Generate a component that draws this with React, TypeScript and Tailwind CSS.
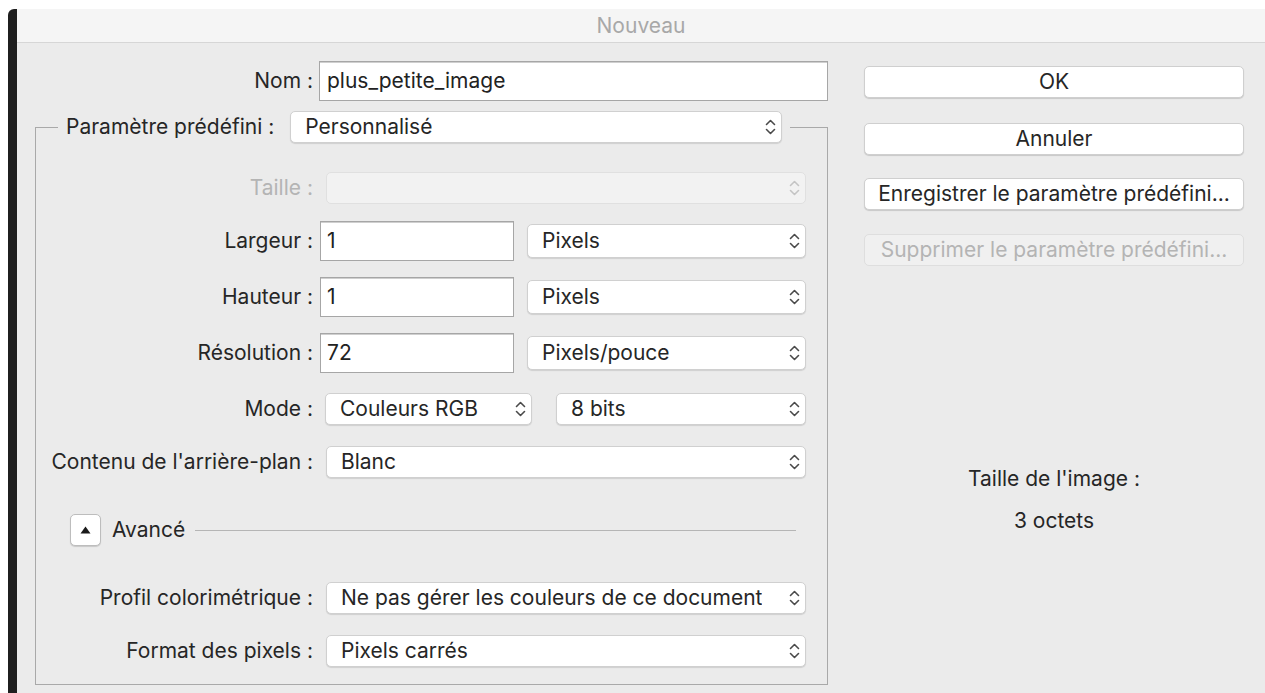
import React from "react";

const font = { fontFamily: "Inter, 'Liberation Sans', sans-serif" };

const Chevrons = ({ muted }: { muted?: boolean }) => (
  <svg width="13" height="20" viewBox="0 0 13 20" className="shrink-0">
    <path
      d="M2.5 7.5 L6.5 3.5 L10.5 7.5 M2.5 12.5 L6.5 16.5 L10.5 12.5"
      fill="none"
      stroke={muted ? "#c4c4c4" : "#4a4a4a"}
      strokeWidth="1.6"
      strokeLinecap="round"
      strokeLinejoin="round"
    />
  </svg>
);

type SelectProps = {
  value?: string;
  className?: string;
  disabled?: boolean;
};

const Select: React.FC<SelectProps> = ({ value, className = "", disabled }) => (
  <div
    className={
      "flex items-center justify-between h-[32px] rounded-[5px] border pl-[14px] pr-[4px] " +
      (disabled
        ? "bg-[#f2f2f2] border-[#e0e0e0] "
        : "bg-white border-[#d0d0d0] shadow-[0_1px_1px_rgba(0,0,0,0.12)] ") +
      className
    }
  >
    <span className="text-[21px] text-[#262626] truncate">{value}</span>
    <Chevrons muted={disabled} />
  </div>
);

const TextInput = ({ value, className = "" }: { value: string; className?: string }) => (
  <div
    className={
      "flex items-center h-[40px] bg-white border border-[#a6a6a6] shadow-[inset_0_1px_0_#cfcfcf] pl-[6px] text-[21px] text-[#222] " +
      className
    }
  >
    {value}
  </div>
);

const Label = ({ children, muted }: { children: React.ReactNode; muted?: boolean }) => (
  <span
    className={
      "w-[277px] shrink-0 text-right text-[21px] whitespace-nowrap " +
      (muted ? "text-[#b4b4b4]" : "text-[#262626]")
    }
  >
    {children}
  </span>
);

const DialogButton = ({ label, disabled }: { label: string; disabled?: boolean }) => (
  <div
    className={
      "flex items-center justify-center h-[32px] rounded-[5px] border text-[21px] whitespace-nowrap " +
      (disabled
        ? "bg-[#f0f0f0] border-[#dedede] text-[#b4b4b4]"
        : "bg-white border-[#cfcfcf] text-[#262626] shadow-[0_1px_1px_rgba(0,0,0,0.15)]")
    }
  >
    {label}
  </div>
);

export default function App() {
  return (
    <div className="w-[1265px] h-[693px] bg-white pl-[8px] pt-[9px] flex overflow-hidden" style={font}>
      <div className="w-[9px] shrink-0 bg-[#1f1f1f] rounded-tl-[6px]" />
      <div className="flex-1 flex flex-col bg-[#ebebeb]">
        {/* title bar */}
        <div className="h-[34px] shrink-0 flex items-center justify-center bg-[#f5f5f5] border-b border-[#d6d6d6]">
          <span className="text-[21px] text-[#a8a8a8]">Nouveau</span>
        </div>

        <div className="flex flex-1">
          {/* left column */}
          <div className="pl-[18px] pt-[19px] w-[811px] shrink-0">
            <div className="flex items-center h-[38px]">
              <span className="w-[278px] shrink-0 text-right text-[21px] text-[#262626]">Nom :</span>
              <TextInput value="plus_petite_image" className="ml-[6px] w-[509px] h-[38px] pl-[7px]" />
            </div>

            <fieldset className="mt-[11px] border border-[#a9a9a9] w-[793px] pb-[17px]">
              <legend className="ml-[22px] px-[8px] flex items-center">
                <span className="text-[21px] text-[#262626] whitespace-nowrap">Paramètre prédéfini :</span>
                <Select value="Personnalisé" className="ml-[16px] w-[492px] h-[30px] pl-[12px]" />
              </legend>

              <div className="flex items-center mt-[29px] h-[32px]">
                <Label muted>Taille :</Label>
                <Select disabled className="ml-[13px] w-[480px]" />
              </div>

              <div className="flex items-center mt-[17px] h-[40px]">
                <Label>Largeur :</Label>
                <TextInput value="1" className="ml-[7px] w-[194px]" />
                <Select value="Pixels" className="ml-[13px] w-[279px] h-[34px]" />
              </div>

              <div className="flex items-center mt-[16px] h-[40px]">
                <Label>Hauteur :</Label>
                <TextInput value="1" className="ml-[7px] w-[194px]" />
                <Select value="Pixels" className="ml-[13px] w-[279px] h-[34px]" />
              </div>

              <div className="flex items-center mt-[16px] h-[40px]">
                <Label>Résolution :</Label>
                <TextInput value="72" className="ml-[7px] w-[194px]" />
                <Select value="Pixels/pouce" className="ml-[13px] w-[279px] h-[34px]" />
              </div>

              <div className="flex items-center mt-[20px] h-[32px]">
                <Label>Mode :</Label>
                <Select value="Couleurs RGB" className="ml-[12px] w-[207px]" />
                <Select value="8 bits" className="ml-[24px] w-[250px]" />
              </div>

              <div className="flex items-center mt-[21px] h-[32px]">
                <Label>Contenu de l'arrière-plan :</Label>
                <Select value="Blanc" className="ml-[13px] w-[480px]" />
              </div>

              <div className="flex items-center mt-[36px] h-[32px] pl-[34px]">
                <div className="w-[31px] h-[32px] shrink-0 rounded-[5px] bg-white border border-[#bdbdbd] shadow-[0_1px_1px_rgba(0,0,0,0.15)] flex items-center justify-center">
                  <svg width="11" height="8" viewBox="0 0 11 8">
                    <path d="M5.5 0.5 L10.5 7.5 L0.5 7.5 Z" fill="#1a1a1a" />
                  </svg>
                </div>
                <span className="ml-[11px] text-[21px] text-[#262626]">Avancé</span>
                <div className="ml-[10px] flex-1 mr-[31px] h-px bg-[#b5b5b5]" />
              </div>

              <div className="flex items-center mt-[36px] h-[32px]">
                <Label>Profil colorimétrique :</Label>
                <Select value="Ne pas gérer les couleurs de ce document" className="ml-[13px] w-[480px]" />
              </div>

              <div className="flex items-center mt-[21px] h-[32px]">
                <Label>Format des pixels :</Label>
                <Select value="Pixels carrés" className="ml-[13px] w-[480px]" />
              </div>
            </fieldset>
          </div>

          {/* right column */}
          <div className="ml-[36px] w-[380px] pt-[23px] flex flex-col">
            <DialogButton label="OK" />
            <div className="mt-[25px]">
              <DialogButton label="Annuler" />
            </div>
            <div className="mt-[23px]">
              <DialogButton label="Enregistrer le paramètre prédéfini..." />
            </div>
            <div className="mt-[24px]">
              <DialogButton label="Supprimer le paramètre prédéfini..." disabled />
            </div>
            <div className="mt-[197px] text-center text-[21px] text-[#262626]">Taille de l'image :</div>
            <div className="mt-[10px] text-center text-[21px] text-[#262626]">3 octets</div>
          </div>
        </div>
      </div>
    </div>
  );
}
